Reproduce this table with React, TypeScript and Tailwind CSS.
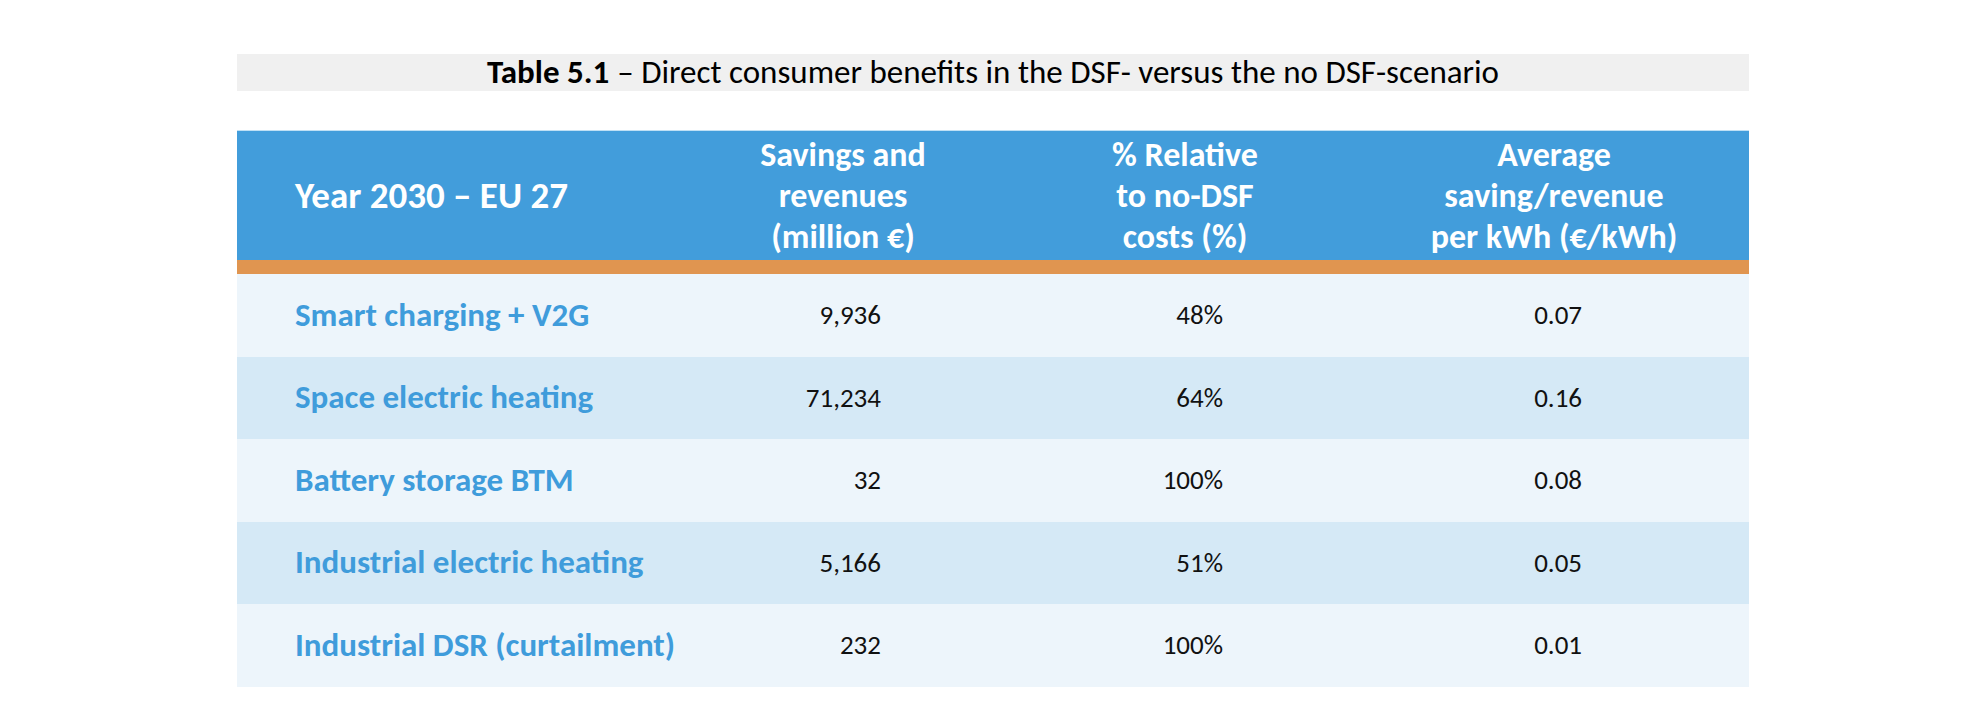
const rows = [
  { label: "Smart charging + V2G", savings: "9,936", pct: "48%", avg: "0.07" },
  { label: "Space electric heating", savings: "71,234", pct: "64%", avg: "0.16" },
  { label: "Battery storage BTM", savings: "32", pct: "100%", avg: "0.08" },
  { label: "Industrial electric heating", savings: "5,166", pct: "51%", avg: "0.05" },
  { label: "Industrial DSR (curtailment)", savings: "232", pct: "100%", avg: "0.01" },
]

export default function App() {
  return (
    <div className="min-h-[718px] w-full bg-white font-['Carlito','Lato',sans-serif]">
      <div className="mx-auto w-[1512px] pt-[54px]">
        {/* Caption */}
        <div className="flex h-[37px] items-center justify-center bg-[#f0f0f0] text-[33px] leading-[37px] text-black">
          <span className="font-bold">Table 5.1</span>
          <span className="ml-[8px]">– Direct consumer benefits in the DSF- versus the no DSF-scenario</span>
        </div>

        {/* Table */}
        <div className="mt-[39px]">
          <div className="grid h-[130px] grid-cols-[438px_336px_348px_390px] items-center border-t border-[#bfe0f5] bg-[#429ddb] text-[34px] font-bold leading-[41px] text-white">
            <div className="pl-[58px] text-[37px]">Year 2030 – EU 27</div>
            <div className="text-center">
              Savings and
              <br />
              revenues
              <br />
              (million €)
            </div>
            <div className="text-center">
              % Relative
              <br />
              to no-DSF
              <br />
              costs (%)
            </div>
            <div className="text-center">
              Average
              <br />
              saving/revenue
              <br />
              per kWh (€/kWh)
            </div>
          </div>
          <div className="h-[14px] bg-[#e09550]" />

          {rows.map((r, i) => (
            <div
              key={r.label}
              className={`grid h-[82.6px] grid-cols-[438px_336px_348px_390px] items-center text-[27px] ${
                i % 2 === 0 ? "bg-[#edf5fb]" : "bg-[#d5e9f6]"
              }`}
            >
              <div className="pl-[58px] text-[33px] font-bold text-[#3f9cdb]">{r.label}</div>
              <div className="pr-[130px] text-right text-[#111]">{r.savings}</div>
              <div className="pr-[136px] text-right text-[#111]">{r.pct}</div>
              <div className="pr-[167px] text-right text-[#111]">{r.avg}</div>
            </div>
          ))}
        </div>
      </div>
    </div>
  )
}
